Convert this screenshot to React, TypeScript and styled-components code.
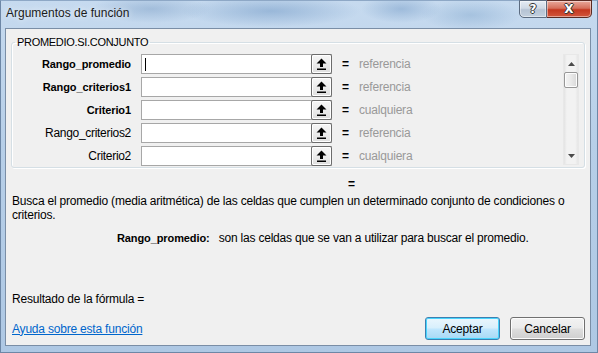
import React from "react";
import styled, { createGlobalStyle } from "styled-components";

const GlobalStyle = createGlobalStyle`
	html, body {
		margin: 0;
		padding: 0;
		background: #b8cfe8;
	}
	body {
		font-family: "Liberation Sans", Arial, sans-serif;
		font-size: 12px;
		letter-spacing: -0.2px;
		color: #000;
	}
`;

const Window = styled.div`
	width: 598px;
	height: 353px;
	box-sizing: border-box;
	display: flex;
	flex-direction: column;
	background:
		radial-gradient(ellipse 60px 14px at 150px 8px, rgba(120, 155, 195, 0.45), transparent),
		radial-gradient(ellipse 90px 16px at 270px 10px, rgba(110, 150, 195, 0.5), transparent),
		radial-gradient(ellipse 40px 14px at 400px 8px, rgba(110, 150, 195, 0.45), transparent),
		radial-gradient(ellipse 50px 16px at 470px 14px, rgba(120, 160, 200, 0.4), transparent),
		linear-gradient(180deg, #c6daef 0%, #b7cfe8 40%, #aec8e4 100%);
	border: 1px solid #6d87a6;
	border-top-color: #8ea8c6;
`;

const TitleBar = styled.div`
	height: 27px;
	display: flex;
	align-items: flex-start;
	padding-left: 5px;
`;

const Title = styled.span`
	margin-top: 5px;
	font-size: 12px;
	letter-spacing: 0;
	color: #1b1b1b;
	text-shadow: 0 0 6px rgba(255, 255, 255, 0.9);
`;

const CaptionButtons = styled.div`
	margin-left: auto;
	margin-right: 5px;
	display: flex;
	margin-top: -1px;
`;

const CaptionButton = styled.div<{ $close?: boolean }>`
	height: 18px;
	width: ${(p) => (p.$close ? "45px" : "28px")};
	box-sizing: border-box;
	display: flex;
	align-items: center;
	justify-content: center;
	font-family: "DejaVu Sans", sans-serif;
	font-weight: bold;
	font-size: 12px;
	letter-spacing: 0;
	color: #fff;
	text-shadow: -1px 0 #333, 1px 0 #333, 0 -1px #333, 0 1px #333;
	border: 1px solid ${(p) => (p.$close ? "#5a2a22" : "#5b6b80")};
	border-radius: ${(p) => (p.$close ? "0 0 5px 0" : "0 0 0 5px")};
	border-left-width: ${(p) => (p.$close ? "0" : "1px")};
	background: ${(p) =>
		p.$close
			? "linear-gradient(180deg, #e9a99b 0%, #d5705c 45%, #c4371f 55%, #d2563c 100%)"
			: "linear-gradient(180deg, #e5ecf4 0%, #cfd9e5 45%, #b5c3d4 55%, #c3d0de 100%)"};
	box-shadow: inset 0 0 0 1px rgba(255, 255, 255, 0.45);
`;

const Client = styled.div`
	flex: 1;
	margin: 0 6px 6px 4px;
	border: 1px solid #7a8ea6;
	background: #f0f0f0;
	display: flex;
	flex-direction: column;
	padding: 0 5px 5px 5px;
`;

const GroupBox = styled.fieldset`
	margin: 7px 0 0 0;
	padding: 6px 5px 1px 0;
	border: 1px solid #d5dfe5;
	border-radius: 3px;
	box-shadow: inset 1px 1px 0 #fff, 1px 1px 0 #fff;
	display: flex;
	min-inline-size: 0;
`;

const Legend = styled.legend`
	padding: 0 2px;
	margin-left: 3px;
	font-size: 11px;
	letter-spacing: -0.3px;
	color: #000;
`;

const Rows = styled.div`
	flex: 1;
	display: flex;
	flex-direction: column;
	gap: 3px;
`;

const Row = styled.div`
	display: flex;
	align-items: center;
	height: 20px;
`;

const Label = styled.span<{ $bold?: boolean }>`
	width: 119px;
	text-align: right;
	margin-right: 10px;
	font-weight: ${(p) => (p.$bold ? "bold" : "normal")};
	font-size: ${(p) => (p.$bold ? "11px" : "12px")};
	letter-spacing: ${(p) => (p.$bold ? "-0.1px" : "-0.3px")};
`;

const Field = styled.div`
	width: 191px;
	height: 20px;
	box-sizing: border-box;
	display: flex;
	background: #fff;
	border: 1px solid #a7a7a7;
	border-right: none;
`;

const FieldInput = styled.div`
	flex: 1;
	position: relative;
`;

const Caret = styled.span`
	position: absolute;
	left: 3px;
	top: 3px;
	width: 1px;
	height: 13px;
	background: #000;
`;

const PickButton = styled.div`
	width: 21px;
	height: 20px;
	margin-top: -1px;
	box-sizing: border-box;
	border: 1px solid #6c6c6c;
	border-radius: 2px;
	background: linear-gradient(180deg, #f6f6f6 0%, #ececec 50%, #dedede 100%);
	box-shadow: inset 0 0 0 1px #fff;
	display: flex;
	align-items: center;
	justify-content: center;
`;

const Equals = styled.span`
	margin-left: 10px;
	width: 6px;
	font-weight: bold;
`;

const Value = styled.span`
	margin-left: 11px;
	color: #999;
`;

const ScrollBar = styled.div`
	width: 16px;
	height: 111px;
	box-sizing: border-box;
	background: linear-gradient(90deg, #e3e3e3 0%, #f2f2f2 20%, #f2f2f2 80%, #e6e6e6 100%);
	border: 1px solid #e8e8e8;
	display: flex;
	flex-direction: column;
	align-items: center;
`;

const ArrowBox = styled.div`
	height: 17px;
	width: 100%;
	display: flex;
	align-items: center;
	justify-content: center;
`;

const Thumb = styled.div`
	width: 14px;
	height: 16px;
	box-sizing: border-box;
	border: 1px solid #979797;
	border-radius: 2px;
	background: linear-gradient(90deg, #f4f4f4 0%, #e9e9e9 50%, #d8d8d8 100%);
	box-shadow: inset 0 0 0 1px #fdfdfd;
`;

const Track = styled.div`
	flex: 1;
`;

const EqualsLine = styled.div`
	margin-top: 9px;
	padding-left: 337px;
	font-weight: bold;
	line-height: 14px;
`;

const Description = styled.p`
	margin: 3px 0 0 1px;
	line-height: 14px;
	width: 575px;
`;

const ArgHelp = styled.div`
	margin-top: 9px;
	padding-left: 106px;
	display: flex;
	gap: 9px;
	line-height: 14px;
`;

const ArgName = styled.span`
	font-weight: bold;
	font-size: 11px;
	letter-spacing: -0.1px;
`;

const Footer = styled.div`
	margin-top: auto;
	display: flex;
	flex-direction: column;
`;

const Result = styled.div`
	padding-left: 1px;
	line-height: 14px;
`;

const ActionRow = styled.div`
	margin-top: 11px;
	display: flex;
	align-items: center;
	gap: 10px;
`;

const HelpLink = styled.a`
	margin-left: 1px;
	margin-right: auto;
	color: #0066cc;
	text-decoration: underline;
	cursor: pointer;
`;

const Button = styled.button<{ $default?: boolean }>`
	width: 75px;
	height: 23px;
	font-family: "Liberation Sans", Arial, sans-serif;
	font-size: 12px;
	letter-spacing: -0.2px;
	color: #000;
	border-radius: 3px;
	border: 1px solid ${(p) => (p.$default ? "#3c7fb1" : "#707070")};
	background: ${(p) =>
		p.$default
			? "linear-gradient(180deg, #eaf6fd 0%, #d9f0fc 45%, #bee6fd 55%, #a7d9f5 100%)"
			: "linear-gradient(180deg, #f2f2f2 0%, #ebebeb 45%, #dddddd 55%, #cfcfcf 100%)"};
	box-shadow: inset 0 0 0 1px ${(p) => (p.$default ? "#48d5fd" : "#fcfcfc")};
	padding: 0;
`;

const UpArrow = () => (
	<svg width="11" height="12" viewBox="0 0 11 12">
		<path d="M5.5 0.5 L10.5 5.5 L7 5.5 L7 9 L4 9 L4 5.5 L0.5 5.5 Z" fill="#000" />
		<rect x="1" y="10.5" width="9" height="1.5" fill="#000" />
	</svg>
);

const ScrollArrow = ({ down }: { down?: boolean }) => (
	<svg width="7" height="4" viewBox="0 0 7 4">
		<path d={down ? "M0 0 L7 0 L3.5 4 Z" : "M0 4 L7 4 L3.5 0 Z"} fill="#4a4a4a" />
	</svg>
);

const args = [
	{ name: "Rango_promedio", bold: true, value: "referencia", caret: true },
	{ name: "Rango_criterios1", bold: true, value: "referencia" },
	{ name: "Criterio1", bold: true, value: "cualquiera" },
	{ name: "Rango_criterios2", bold: false, value: "referencia" },
	{ name: "Criterio2", bold: false, value: "cualquiera" },
];

const App = () => {
	return (
		<>
			<GlobalStyle />
			<Window>
				<TitleBar>
					<Title>Argumentos de función</Title>
					<CaptionButtons>
						<CaptionButton>?</CaptionButton>
						<CaptionButton $close>X</CaptionButton>
					</CaptionButtons>
				</TitleBar>
				<Client>
					<GroupBox>
						<Legend>PROMEDIO.SI.CONJUNTO</Legend>
						<Rows>
							{args.map((a) => (
								<Row key={a.name}>
									<Label $bold={a.bold}>{a.name}</Label>
									<Field>
										<FieldInput>{a.caret && <Caret />}</FieldInput>
										<PickButton>
											<UpArrow />
										</PickButton>
									</Field>
									<Equals>=</Equals>
									<Value>{a.value}</Value>
								</Row>
							))}
						</Rows>
						<ScrollBar>
							<ArrowBox>
								<ScrollArrow />
							</ArrowBox>
							<Thumb />
							<Track />
							<ArrowBox>
								<ScrollArrow down />
							</ArrowBox>
						</ScrollBar>
					</GroupBox>
					<EqualsLine>=</EqualsLine>
					<Description>
						Busca el promedio (media aritmética) de las celdas que cumplen un
						determinado conjunto de condiciones o criterios.
					</Description>
					<ArgHelp>
						<ArgName>Rango_promedio:</ArgName>
						<span>son las celdas que se van a utilizar para buscar el promedio.</span>
					</ArgHelp>
					<Footer>
						<Result>Resultado de la fórmula =</Result>
						<ActionRow>
							<HelpLink>Ayuda sobre esta función</HelpLink>
							<Button $default>Aceptar</Button>
							<Button>Cancelar</Button>
						</ActionRow>
					</Footer>
				</Client>
			</Window>
		</>
	);
};

export default App;
